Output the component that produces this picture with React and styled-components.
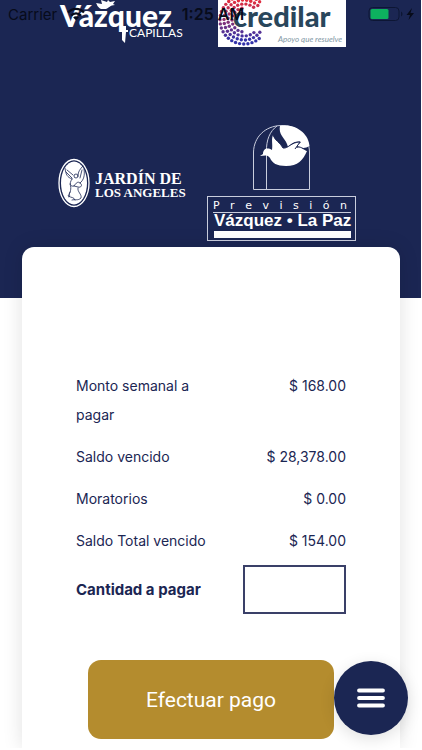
import React from "react";
import styled, { createGlobalStyle } from "styled-components";

const navy = "#1b2653";
const gold = "#b48c2e";

const balances = [
  { label: "Monto semanal a pagar", value: "$ 168.00" },
  { label: "Saldo vencido", value: "$ 28,378.00" },
  { label: "Moratorios", value: "$ 0.00" },
  { label: "Saldo Total vencido", value: "$ 154.00" },
];

// dotted rings of the Credilar mark, open on the right side
const dots = [];
[12, 16, 20, 24].forEach((r, ring) => {
  const count = Math.round((2 * Math.PI * r) / 4.2);
  for (let i = 0; i < count; i++) {
    const angle = (i / count) * 2 * Math.PI + ring * 0.12;
    const x = 26 + r * Math.cos(angle);
    const y = 20 + r * Math.sin(angle);
    if (x > 42 || (x > 26 && Math.abs(y - 20) < 12)) continue;
    const t = Math.max(0, Math.min(1, y / 40));
    const red = Math.round(230 - 180 * t);
    const green = Math.round(45 + 5 * t);
    const blue = Math.round(60 + 110 * t);
    dots.push({ x, y, fill: `rgb(${red}, ${green}, ${blue})` });
  }
});

function VazquezLogo() {
  return (
    <svg width="126" height="47" viewBox="0 0 126 47" role="img" aria-label="Vázquez Capillas">
      <path
        d="M42 9 C38 7 38 4 37 3 L43 4 L42 0 L48 2 L49 0 L51 2 L56 1 L54 4 L56 5 C51 5 50 8 47 9 Z"
        fill="#fff"
      />
      <text x="1" y="27" fill="#fff" fontFamily="Lato, sans-serif" fontWeight="900" fontSize="30">
        Vázquez
      </text>
      <path d="M62 26 H67 V30 H69 V32 H67 L66 43 L63 40 V32 H61 V30 H62 Z" fill="#fff" />
      <text x="70" y="37" fill="#fff" fontFamily="Lato, sans-serif" fontSize="12">
        CAPILLAS
      </text>
    </svg>
  );
}

function CredilarLogo() {
  return (
    <svg width="128" height="47" viewBox="0 0 128 47" role="img" aria-label="Credilar">
      <rect width="128" height="47" fill="#fff" />
      {dots.map((dot, i) => (
        <circle key={i} cx={dot.x} cy={dot.y} r="1.7" fill={dot.fill} />
      ))}
      <text x="15" y="27" fill="#29465b" fontFamily="Lato, sans-serif" fontWeight="900" fontSize="29">
        credilar
      </text>
      <text
        x="60"
        y="42"
        fill="#7f98a5"
        fontFamily="Lato, sans-serif"
        fontStyle="italic"
        fontSize="8"
      >
        Apoyo que resuelve
      </text>
    </svg>
  );
}

function JardinLogo() {
  return (
    <svg width="128" height="50" viewBox="0 0 128 50" role="img" aria-label="Jardín de los Angeles">
      <ellipse cx="16" cy="25" rx="15" ry="23.5" fill="none" stroke="#fff" strokeWidth="1.3" />
      <ellipse cx="16" cy="25" rx="13" ry="21.5" fill="#fff" />
      <g fill="none" stroke={navy} strokeWidth="0.8" strokeLinecap="round">
        <path d="M7 10 C8 17 9 19 14 21 M9 12 L15 17 M8 14 L14 20" />
        <path d="M25 8 C22 11 20 14 20 17 M26 11 C27 17 26 22 22 25 M24 12 L22 20" />
        <circle cx="18" cy="18" r="2" />
        <path d="M14 21 C11 25 12 29 16 28 C18 25 20 23 22 25 C25 27 23 30 20 29 L16 28" />
        <path d="M12 26 C14 31 12 35 10 38 C14 40 16 39 17 42" />
        <path d="M20 30 C19 34 24 36 23 40 C20 43 17 41 14 42 M12 34 C10 36 13 37 11 39" />
      </g>
      <text x="37" y="26" fill="#fff" fontFamily="Liberation Serif, serif" fontWeight="700" fontSize="16">
        JARDÍN DE
      </text>
      <text x="37" y="39" fill="#fff" fontFamily="Liberation Serif, serif" fontWeight="700" fontSize="13">
        LOS ANGELES
      </text>
    </svg>
  );
}

function PrevisionLogo() {
  return (
    <svg width="152" height="118" viewBox="0 0 152 118" role="img" aria-label="Previsión Vázquez La Paz">
      <g fill="none" stroke="#c9cddd" strokeWidth="1">
        <path d="M47.5 65.5 V28 C48 13 59 2 75 1.5 C91 1 103 12 103.5 28 V65.5 Z" />
        <path d="M60.5 65.5 V28 C60 16 64 7 71 2" />
      </g>
      <path
        d="M74 2 C91 -1 103 11 103.5 22 C99 25 94 24 91 22 L95 18 C89 16 84 21 82 23 C80 14 72 12 74 2 Z"
        fill="#fff"
      />
      <path
        d="M54 32 L57 30 C57 25 61 23 66 26 C67 20 65 16 67 11 C69 17 74 18 77 24 C82 25 85 18 94 18 L90 24 C94 22 97 25 101 27 C97 36 92 42 80 42 C71 42 66 39 64 34 C61 30 58 32 54 32 Z"
        fill="#fff"
      />
      <path
        d="M67 11 C69 17 74 18 77 24 C82 25 85 18 94 18 L89 25 M91 23 C94 22 97 25 102 27"
        fill="none"
        stroke={navy}
        strokeWidth="1"
      />
      <rect x="1.5" y="72.5" width="148" height="44" fill="none" stroke="#c9cddd" />
      <text x="7" y="85" fill="#fff" fontFamily="DejaVu Sans, sans-serif" fontSize="11">
        {"Previsión".split("").join("\u00a0\u00a0\u00a0")}
      </text>
      <path d="M7 88.5 H145" stroke="#c9cddd" />
      <text x="8" y="102" fill="#fff" fontFamily="Liberation Sans, sans-serif" fontWeight="700" fontSize="17">
        Vázquez • La Paz
      </text>
      <rect x="8" y="107" width="137" height="7" fill="#fff" />
    </svg>
  );
}

export default function App() {
  return (
    <Page>
      <GlobalStyle />
      <StatusBar>
        <Carrier>
          Carrier
          <svg width="18" height="14" viewBox="0 0 17 13" aria-hidden="true">
            <g fill="none" stroke="currentColor" strokeWidth="2.2">
              <path d="M1 5 C5 0.5 12 0.5 16 5" />
              <path d="M4 8 C6.500 5.200 10.500 5.200 13 8" />
            </g>
            <path d="M8.500 12.500 L5.800 9.800 C7.200 8.300 9.800 8.300 11.200 9.800 Z" fill="currentColor" />
          </svg>
        </Carrier>
        <Clock>1:25 AM</Clock>
        <Battery>
          <svg width="50" height="16" viewBox="0 0 50 16" aria-hidden="true">
            <rect x="1" y="1.500" width="30" height="13" rx="3.500" fill="none" stroke="#0d1634" />
            <rect x="2.500" y="3" width="18" height="10" rx="1.500" fill="#0db25f" />
            <path d="M33 5.500 C35 6.500 35 9.500 33 10.500 Z" fill="#0d1634" />
            <path d="M44 2 L38.500 9 H42 L40.500 14 L46 7 H42.500 Z" fill="#070b1a" />
          </svg>
        </Battery>
      </StatusBar>

      <Hero>
        <VazquezLogo />
        <CredilarLogo />
        <JardinLogo />
        <PrevisionLogo />
      </Hero>

      <Card>
        <Balances>
          {balances.map((item) => (
            <Row key={item.label}>
              <dt>{item.label}</dt>
              <Amount>{item.value}</Amount>
            </Row>
          ))}
        </Balances>
        <form onSubmit={(e) => e.preventDefault()}>
          <Field>
            <Label htmlFor="cantidad">Cantidad a pagar</Label>
            <Input id="cantidad" type="text" inputMode="decimal" />
          </Field>
          <PayButton type="submit">Efectuar pago</PayButton>
        </form>
      </Card>

      <MenuButton type="button" aria-label="Menú">
        <svg width="28" height="20" viewBox="0 0 28 20" aria-hidden="true">
          <path d="M2 2.500 H26 M2 10 H26 M2 17.500 H26" stroke="#fff" strokeWidth="3.800" strokeLinecap="round" />
        </svg>
      </MenuButton>
    </Page>
  );
}

const GlobalStyle = createGlobalStyle`
  * {
    box-sizing: border-box;
  }
  body {
    margin: 0;
    background: #fff;
    color: ${navy};
    font-family: Inter, sans-serif;
  }
`;
const Page = styled.main`
  position: relative;
  overflow: hidden;
`;
const StatusBar = styled.header`
  position: absolute;
  top: 0;
  left: 0;
  right: 0;
  z-index: 2;
  display: grid;
  grid-template-columns: 1fr auto 1fr;
  align-items: center;
  height: 28px;
  padding: 0 4px 0 8px;
  color: #070b1a;
  font-size: 15px;
`;
const Carrier = styled.span`
  display: flex;
  align-items: center;
  gap: 10px;
`;
const Clock = styled.time`
  font-weight: 600;
  font-size: 16px;
`;
const Battery = styled.span`
  display: flex;
  justify-content: flex-end;
`;
const Hero = styled.section`
  display: grid;
  grid-template-columns: 160px 160px;
  justify-content: center;
  place-items: center;
  row-gap: 77px;
  margin-right: 1px;
  padding: 0 18px 56px 0;
  background: ${navy};
`;
const Card = styled.section`
  position: relative;
  margin: -51px 22px 0;
  padding: 124px 54px 9px;
  background: #fff;
  border-radius: 12px 12px 0 0;
  box-shadow: 0 0 20px rgba(0, 0, 0, 0.12);
`;
const Balances = styled.dl`
  display: flex;
  flex-direction: column;
  gap: 13px;
  margin: 0 0 10px;
  font-size: 14px;
  line-height: 29px;
`;
const Row = styled.div`
  display: grid;
  grid-template-columns: 54% 1fr;
`;
const Amount = styled.dd`
  margin: 0;
  text-align: right;
`;
const Field = styled.div`
  display: flex;
  align-items: center;
  justify-content: space-between;
`;
const Label = styled.label`
  font-size: 15px;
  font-weight: 700;
`;
const Input = styled.input`
  width: 38%;
  height: 49px;
  padding: 0 10px;
  border: 2px solid #3a4068;
  border-radius: 0;
  background: #fff;
  color: ${navy};
  font: inherit;
`;
const PayButton = styled.button`
  display: block;
  width: 91%;
  height: 79px;
  margin: 46px auto 0;
  border: 0;
  border-radius: 13px;
  background: ${gold};
  color: #fff;
  font-family: Roboto, sans-serif;
  font-size: 21px;
`;
const MenuButton = styled.button`
  position: fixed;
  right: 14px;
  bottom: 15px;
  z-index: 3;
  display: flex;
  align-items: center;
  justify-content: center;
  width: 74px;
  height: 74px;
  padding: 0;
  border: 0;
  border-radius: 50%;
  background: ${navy};
  box-shadow: 0 4px 16px rgba(0, 0, 0, 0.12);
`;
